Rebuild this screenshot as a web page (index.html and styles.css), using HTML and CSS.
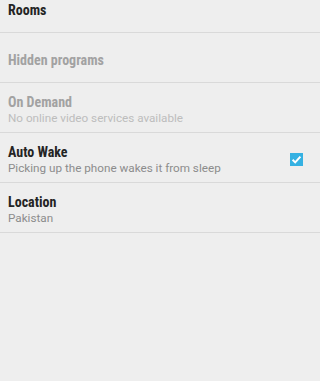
FILE: index.html
```html
<!DOCTYPE html>
<html>
<head>
<meta charset="utf-8">
<link rel="stylesheet" href="styles.css">
</head>
<body>
<div class="list">
  <div class="row">
    <div class="text"><div class="title">Rooms</div></div>
  </div>
  <div class="row">
    <div class="text"><div class="title dim">Hidden programs</div></div>
  </div>
  <div class="row">
    <div class="text">
      <div class="title dim">On Demand</div>
      <div class="sub dim">No online video services available</div>
    </div>
  </div>
  <div class="row">
    <div class="text">
      <div class="title">Auto Wake</div>
      <div class="sub">Picking up the phone wakes it from sleep</div>
    </div>
    <svg class="check" width="13" height="13" viewBox="0 0 13 13">
      <rect x="0" y="0" width="13" height="13" fill="#35b1e2"/>
      <path d="M2.6 6.8 L5.2 9.4 L10.4 3.6" fill="none" stroke="#ffffff" stroke-width="2"/>
    </svg>
  </div>
  <div class="row">
    <div class="text">
      <div class="title">Location</div>
      <div class="sub">Pakistan</div>
    </div>
  </div>
</div>
</body>
</html>
```
FILE: styles.css
```css
html, body {
  margin: 0;
  padding: 0;
  background: #eeeeee;
  height: 100%;
}
.list {
  margin-top: -17px;
}
.row {
  border-bottom: 1px solid #d9d9d9;
  display: flex;
  align-items: center;
  padding: 4px 17px 0 8px;
  height: 45px;
}
.text {
  flex: 1;
}
.title {
  font-family: "Roboto Condensed", Roboto, sans-serif;
  font-stretch: 75%;
  font-weight: bold;
  font-size: 14px;
  line-height: 16px;
  color: #242424;
}
.sub {
  font-family: Roboto, "Liberation Sans", sans-serif;
  font-size: 11.7px;
  line-height: 14px;
  margin-top: 1px;
  color: #8c8c8c;
}
.title.dim {
  color: #a2a2a2;
}
.sub.dim {
  color: #bdbdbd;
}
.check {
  display: block;
}
```
